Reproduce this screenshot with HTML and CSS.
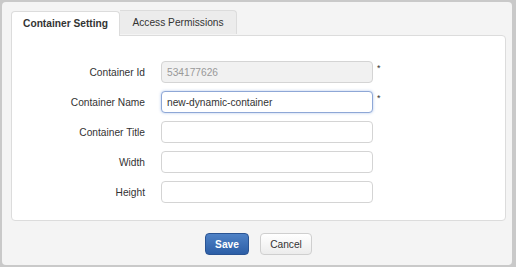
FILE: index.html
```html
<!DOCTYPE html>
<html lang="en">
  <head>
    <meta charset="UTF-8" />
    <title>Container Setting</title>
    <link rel="stylesheet" href="styles.css">
  </head>
  <body>
    <div class="dialog">
      <ul class="tabs">
        <li class="tab active">Container Setting</li>
        <li class="tab">Access Permissions</li>
      </ul>

      <div class="panel">
        <form class="settingsForm">
          <label for="containerId">Container Id</label>
          <input type="text" id="containerId" value="534177626" disabled />
          <span class="required">*</span>

          <label for="containerName">Container Name</label>
          <input type="text" id="containerName" class="focused" value="new-dynamic-container" />
          <span class="required">*</span>

          <label for="containerTitle">Container Title</label>
          <input type="text" id="containerTitle" />
          <span></span>

          <label for="width">Width</label>
          <input type="text" id="width" />
          <span></span>

          <label for="height">Height</label>
          <input type="text" id="height" />
          <span></span>
        </form>
      </div>

      <div class="actions">
        <button type="button" class="btn primary">Save</button>
        <button type="button" class="btn">Cancel</button>
      </div>
    </div>
  </body>
</html>
```

FILE: styles.css
```css
body {
  margin: 0;
  background-color: #c9c9c9;
  font-family: "Liberation Sans", Arial, sans-serif;
  font-size: 10.2px;
  color: #333;
}

.dialog {
  box-sizing: border-box;
  width: 510px;
  height: 263px;
  margin: 2px;
  padding: 8px 6px 0 9px;
  background-color: #f4f4f4;
  border-radius: 4px;
}

.tabs {
  display: flex;
  list-style: none;
  margin: 0;
  padding: 0;
}

.tab {
  box-sizing: border-box;
  height: 25px;
  line-height: 24px;
  white-space: nowrap;
  text-align: center;
  background-color: #ececec;
  border: 1px solid #dcdcdc;
  border-bottom: none;
  border-left: none;
  border-radius: 0 4px 0 0;
}

.tab.active {
  width: 109px;
  font-weight: bold;
  background-color: #fff;
  border-left: 1px solid #dcdcdc;
  border-radius: 4px 4px 0 0;
  position: relative;
  top: 1px;
  z-index: 1;
}

.tab:not(.active) {
  width: 117px;
  height: 24px;
}

.panel {
  box-sizing: border-box;
  height: 186px;
  padding: 25px 0 0;
  background-color: #fff;
  border: 1px solid #dcdcdc;
  border-radius: 0 4px 4px 4px;
}

.settingsForm {
  display: grid;
  grid-template-columns: 133px 212px 12px;
  column-gap: 16px;
  row-gap: 8px;
  align-items: center;
}

.settingsForm label {
  text-align: right;
}

.settingsForm input {
  box-sizing: border-box;
  width: 212px;
  height: 22px;
  margin: 0;
  padding: 0 5px;
  font-family: inherit;
  font-size: 10.2px;
  color: #333;
  background-color: #fff;
  border: 1px solid #d4d4d4;
  border-radius: 4px;
  outline: none;
}

.settingsForm input:disabled {
  color: #999;
  background-color: #f1f1f1;
}

.settingsForm input.focused {
  border-color: #8ea7d6;
  box-shadow: 0 0 3px rgba(82, 130, 210, 0.45);
}

.required {
  margin-left: -12px;
  align-self: start;
  line-height: 14px;
  font-size: 9px;
}

.actions {
  display: flex;
  justify-content: center;
  gap: 11px;
  margin-top: 12px;
}

.btn {
  box-sizing: border-box;
  width: 52px;
  height: 22px;
  padding: 0;
  font-family: inherit;
  font-size: 10.2px;
  color: #333;
  background: linear-gradient(#ffffff, #ececec);
  border: 1px solid #cfcfcf;
  border-radius: 4px;
}

.btn.primary {
  width: 44px;
  font-weight: bold;
  color: #fff;
  background: linear-gradient(#4f82c6, #2c5ea6);
  border-color: #2a5493;
}
```
